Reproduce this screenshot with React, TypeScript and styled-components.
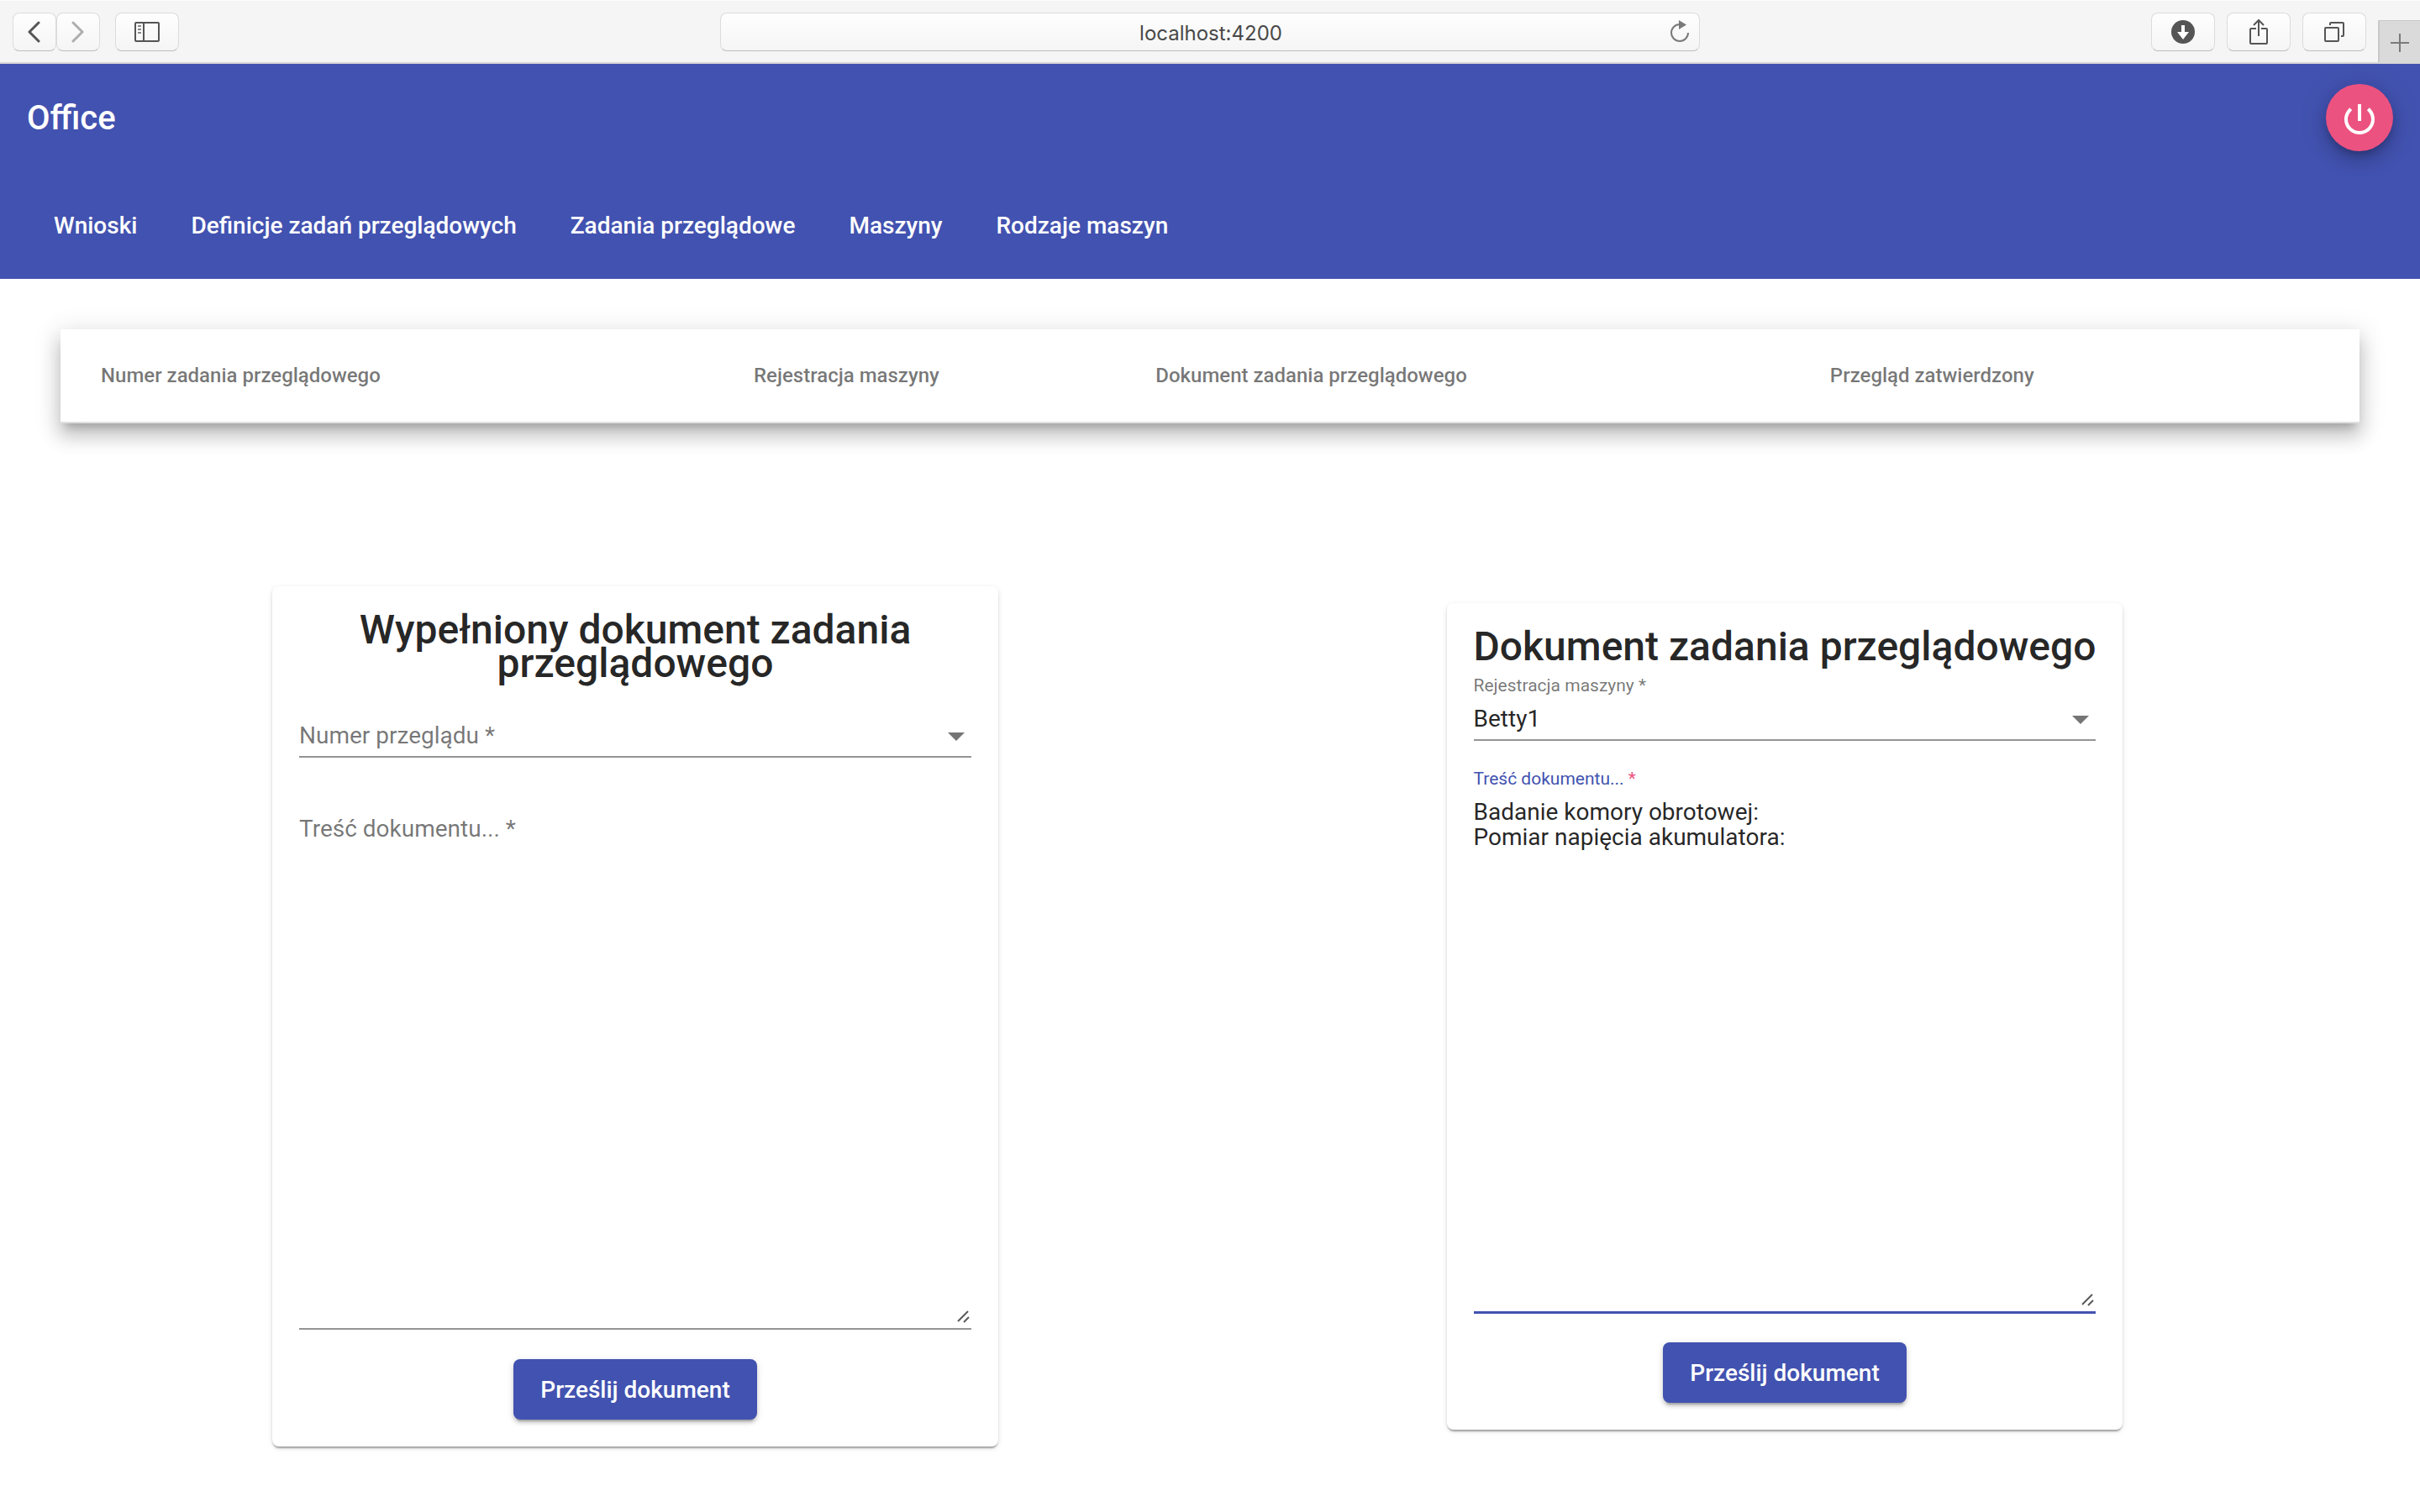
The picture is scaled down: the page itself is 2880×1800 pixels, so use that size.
import React from "react";
import styled, { createGlobalStyle, css } from "styled-components";

const indigo = "#4252b0";
const pink = "#ec5280";
const uiFont = `Roboto, "Liberation Sans", sans-serif`;

const GlobalStyle = createGlobalStyle`
  *, *::before, *::after { box-sizing: border-box; }
  body {
    margin: 0;
    background: #fff;
    color: rgba(0, 0, 0, 0.87);
    font-family: ${uiFont};
    font-size: 28px;
    line-height: 32px;
  }
  button, input, select, textarea { font: inherit; color: inherit; margin: 0; }
`;

/* Browser bar */

const BrowserBar = styled.div`
  display: grid;
  grid-template-columns: 1fr minmax(0, 1166px) 1fr;
  align-items: center;
  height: 76px;
  background: #f5f5f5;
  border-top: 1px solid #fcfcfc;
  border-bottom: 2px solid #d6d6d6;
`;

const BarStart = styled.div`
  display: flex;
  padding-left: 15px;
`;

const BarEnd = styled.div`
  display: flex;
  align-items: center;
  justify-content: flex-end;
  align-self: stretch;
  gap: 14px;
`;

const raised = css`
  border: 1px solid #dcdcdc;
  border-bottom-color: #bdbdbd;
  border-radius: 8px;
  background: linear-gradient(#fefefe, #f5f5f5);
  height: 46px;
`;

const BarButton = styled.button<{ $narrow?: boolean; $spaced?: boolean }>`
  ${raised}
  display: flex;
  align-items: center;
  justify-content: center;
  padding: 0;
  width: ${(p) => (p.$narrow ? 52 : 76)}px;
  margin-left: ${(p) => (p.$spaced ? 18 : 0)}px;
  color: #555;

  &:disabled {
    color: #aeaeae;
  }
`;

const AddressBox = styled.div`
  ${raised}
  display: grid;
  grid-template-columns: 36px 1fr 36px;
  align-items: center;
  padding: 0 5px 0 7px;
`;

const AddressInput = styled.input`
  grid-column: 2;
  width: 100%;
  border: 0;
  padding: 4px 0 0;
  background: none;
  outline: none;
  text-align: center;
  color: #484848;
  font-family: Inter, "Liberation Sans", sans-serif;
  font-size: 24px;
  line-height: 32px;
`;

const PlainIconButton = styled.button`
  display: flex;
  align-items: center;
  justify-content: center;
  border: 0;
  padding: 0;
  background: none;
  color: #7a7a7a;
`;

const NewTabButton = styled(PlainIconButton)`
  align-self: flex-end;
  width: 50px;
  height: 50px;
  padding-top: 3px;
  border-left: 2px solid #c8c8c8;
  border-top: 1px solid #c8c8c8;
  background: #dadada;
`;

/* Application header */

const Header = styled.header`
  background: ${indigo};
  color: #fff;
`;

const HeaderRow = styled.div`
  display: flex;
  align-items: center;
  justify-content: space-between;
  height: 128px;
  padding: 0 32px;
`;

const Brand = styled.span`
  padding-top: 2px;
  font-size: 40px;
  line-height: 64px;
  font-weight: 500;
`;

const PowerButton = styled.button`
  display: flex;
  align-items: center;
  justify-content: center;
  width: 80px;
  height: 80px;
  border: 0;
  border-radius: 50%;
  padding: 0;
  background: ${pink};
  color: #fff;
  box-shadow: 0 6px 10px -2px rgba(0, 0, 0, 0.2), 0 12px 20px rgba(0, 0, 0, 0.14),
    0 2px 36px rgba(0, 0, 0, 0.12);
`;

const Nav = styled.nav`
  display: flex;
  align-items: center;
  height: 128px;
  padding: 2px 32px 0;
`;

const NavLink = styled.a`
  padding: 0 32px;
  line-height: 72px;
  font-weight: 500;
  color: inherit;
  text-decoration: none;
`;

/* Content */

const Main = styled.main`
  padding: 60px 2.5% 72px;
`;

const TaskTable = styled.table`
  width: 100%;
  border-collapse: separate;
  border-spacing: 0;
  background: #fff;
  box-shadow: 0 10px 10px -6px rgba(0, 0, 0, 0.2), 0 16px 20px 2px rgba(0, 0, 0, 0.14),
    0 6px 28px 4px rgba(0, 0, 0, 0.12);
`;

const HeadCell = styled.th`
  height: 112px;
  padding: 0;
  border-bottom: 2px solid #e0e0e0;
  text-align: left;
  font-size: 24px;
  font-weight: 500;
  color: rgba(0, 0, 0, 0.54);

  &:first-child {
    padding-left: 48px;
  }
  &:last-child {
    padding-right: 48px;
  }
`;

const Cards = styled.div`
  display: grid;
  grid-template-columns: 1fr 1fr;
  align-items: center;
  justify-items: center;
  margin-top: 194px;
`;

const Card = styled.form`
  display: flex;
  flex-direction: column;
  padding: 32px;
  border-radius: 8px;
  background: #fff;
  box-shadow: 0 4px 2px -2px rgba(0, 0, 0, 0.2), 0 2px 2px rgba(0, 0, 0, 0.14),
    0 2px 6px rgba(0, 0, 0, 0.12);
`;

const WideCard = styled(Card)`
  width: 864px;
`;

const CardTitle = styled.h1`
  margin: 0;
  text-align: center;
  font-size: 48px;
  line-height: 40px;
  font-weight: 500;
`;

const Field = styled.div`
  display: grid;
  grid-template-columns: 1fr;
  grid-template-rows: 38px auto;

  & + & {
    margin-top: 19px;
  }
`;

const FloatingLabel = styled.label<{ $active?: boolean }>`
  grid-area: 1 / 1;
  padding-top: 14px;
  font-size: 21px;
  line-height: 24px;
  color: ${(p) => (p.$active ? indigo : "rgba(0, 0, 0, 0.54)")};
`;

const RestingLabel = styled.label`
  grid-area: 2 / 1;
  justify-self: start;
  z-index: 1;
  padding-top: 12px;
  color: rgba(0, 0, 0, 0.54);
  pointer-events: none;
`;

const RequiredMark = styled.span`
  color: ${pink};
`;

const underlined = css`
  grid-area: 2 / 1;
  width: 100%;
  border: 0;
  border-bottom: 2px solid #949494;
  border-radius: 0;
  outline: none;
  background: none;
`;

const Select = styled.select`
  ${underlined}
  appearance: none;
  height: 54px;
  padding: 12px 36px 8px 0;
`;

const SelectArrow = styled.svg`
  grid-area: 2 / 1;
  align-self: center;
  justify-self: end;
  margin: 4px 8px 0 0;
  fill: #757575;
  pointer-events: none;
`;

const TextArea = styled.textarea<{ $active?: boolean }>`
  ${underlined}
  display: block;
  height: 624px;
  padding: 13px 0 8px;
  line-height: 30px;
  resize: none;
  ${(p) =>
    p.$active &&
    css`
      border-bottom-color: ${indigo};
      box-shadow: 0 1px ${indigo};
    `}
`;

const ResizeGrip = styled.svg`
  grid-area: 2 / 1;
  align-self: end;
  justify-self: end;
  margin: 0 2px 8px 0;
  stroke: #5a5a5a;
  stroke-width: 2;
  pointer-events: none;
`;

const SubmitButton = styled.button`
  align-self: center;
  height: 72px;
  margin-top: 35px;
  padding: 2px 32px 0;
  border: 0;
  border-radius: 8px;
  background: ${indigo};
  color: #fff;
  font-weight: 500;
  box-shadow: 0 6px 2px -4px rgba(0, 0, 0, 0.2), 0 4px 4px rgba(0, 0, 0, 0.14),
    0 2px 10px rgba(0, 0, 0, 0.12);
`;

const Arrow = () => (
  <SelectArrow width="20" height="10" viewBox="0 0 20 10" aria-hidden="true">
    <path d="M0 0h20L10 10z" />
  </SelectArrow>
);

const Grip = () => (
  <ResizeGrip width="15" height="15" viewBox="0 0 15 15" aria-hidden="true">
    <path d="M1 13 13 1M8 14l6-6" />
  </ResizeGrip>
);

const navItems = [
  "Wnioski",
  "Definicje zadań przeglądowych",
  "Zadania przeglądowe",
  "Maszyny",
  "Rodzaje maszyn",
];

const columns = [
  "Numer zadania przeglądowego",
  "Rejestracja maszyny",
  "Dokument zadania przeglądowego",
  "Przegląd zatwierdzony",
];

function Browser() {
  return (
    <BrowserBar>
      <BarStart>
        <BarButton $narrow aria-label="Wstecz">
          <svg width="16" height="26" viewBox="0 0 16 26" fill="none" stroke="currentColor" strokeWidth="3">
            <path d="M13 2 2 13l11 11" strokeLinecap="round" strokeLinejoin="round" />
          </svg>
        </BarButton>
        <BarButton $narrow disabled aria-label="Dalej">
          <svg width="16" height="26" viewBox="0 0 16 26" fill="none" stroke="currentColor" strokeWidth="3">
            <path d="m2 2 11 11L2 24" strokeLinecap="round" strokeLinejoin="round" />
          </svg>
        </BarButton>
        <BarButton $spaced aria-label="Pasek boczny">
          <svg width="30" height="24" viewBox="0 0 30 24" fill="none" stroke="currentColor" strokeWidth="2">
            <rect x="1" y="1" width="28" height="22" rx="1" />
            <path d="M11 1v22" />
            <path d="M4 5h4M4 9h4M4 13h4" strokeOpacity="0.7" />
          </svg>
        </BarButton>
      </BarStart>
      <AddressBox>
        <AddressInput aria-label="Adres" defaultValue="localhost:4200" />
        <PlainIconButton aria-label="Odśwież">
          <svg width="26" height="28" viewBox="0 0 26 28" fill="none" stroke="currentColor" strokeWidth="2">
            <path d="M23 15a10 10 0 1 1-10-10h2" />
            <path d="M12 0v11l9-5.500z" fill="currentColor" stroke="none" />
          </svg>
        </PlainIconButton>
      </AddressBox>
      <BarEnd>
        <BarButton aria-label="Pobrane">
          <svg width="28" height="28" viewBox="0 0 28 28">
            <circle cx="14" cy="14" r="14" fill="currentColor" />
            <path d="M12 6h4v8h5l-7 9-7-9h5z" fill="#fff" />
          </svg>
        </BarButton>
        <BarButton aria-label="Udostępnij">
          <svg width="24" height="32" viewBox="0 0 24 32" fill="none" stroke="currentColor" strokeWidth="2">
            <path d="M9 12H3q-1 0-1 1v16q0 1 1 1h18q1 0 1-1V13q0-1-1-1h-6M12 21V2M6 8l6-6 6 6" />
          </svg>
        </BarButton>
        <BarButton aria-label="Karty">
          <svg width="26" height="26" viewBox="0 0 26 26" fill="none" stroke="currentColor" strokeWidth="2">
            <rect x="2" y="8" width="16" height="16" rx="1" />
            <path d="M8 5V3q0-1 1-1h14q1 0 1 1v14q0 1-1 1h-2" />
          </svg>
        </BarButton>
        <NewTabButton aria-label="Nowa karta">
          <svg width="22" height="22" viewBox="0 0 22 22" stroke="currentColor" strokeWidth="2">
            <path d="M0 11h22M11 0v22" />
          </svg>
        </NewTabButton>
      </BarEnd>
    </BrowserBar>
  );
}

export default function App() {
  return (
    <>
      <GlobalStyle />
      <Browser />
      <Header>
        <HeaderRow>
          <Brand>Office</Brand>
          <PowerButton aria-label="Wyloguj">
            <svg width="48" height="48" viewBox="0 -1 24 24" fill="currentColor">
              <path d="M13 3h-2v10h2V3zm4.830 2.170l-1.420 1.420C17.990 7.860 19 9.810 19 12c0 3.870-3.130 7-7 7s-7-3.130-7-7c0-2.190 1.010-4.140 2.580-5.420L6.170 5.170C4.230 6.820 3 9.260 3 12c0 4.970 4.030 9 9 9s9-4.030 9-9c0-2.740-1.230-5.180-3.170-6.830z" />
            </svg>
          </PowerButton>
        </HeaderRow>
        <Nav>
          {navItems.map((item) => (
            <NavLink key={item} href="#">
              {item}
            </NavLink>
          ))}
        </Nav>
      </Header>
      <Main>
        <TaskTable>
          <thead>
            <tr>
              {columns.map((column) => (
                <HeadCell key={column} scope="col">
                  {column}
                </HeadCell>
              ))}
            </tr>
          </thead>
        </TaskTable>
        <Cards>
          <WideCard onSubmit={(e) => e.preventDefault()}>
            <CardTitle>Wypełniony dokument zadania przeglądowego</CardTitle>
            <Field>
              <RestingLabel htmlFor="review-number">Numer przeglądu *</RestingLabel>
              <Select id="review-number" defaultValue="">
                <option value="" />
              </Select>
              <Arrow />
            </Field>
            <Field>
              <RestingLabel htmlFor="filled-content">Treść dokumentu... *</RestingLabel>
              <TextArea id="filled-content" />
              <Grip />
            </Field>
            <SubmitButton>Prześlij dokument</SubmitButton>
          </WideCard>
          <Card onSubmit={(e) => e.preventDefault()}>
            <CardTitle>Dokument zadania przeglądowego</CardTitle>
            <Field>
              <FloatingLabel htmlFor="machine">Rejestracja maszyny *</FloatingLabel>
              <Select id="machine" defaultValue="Betty1">
                <option>Betty1</option>
              </Select>
              <Arrow />
            </Field>
            <Field>
              <FloatingLabel htmlFor="content" $active>
                Treść dokumentu... <RequiredMark>*</RequiredMark>
              </FloatingLabel>
              <TextArea
                id="content"
                $active
                defaultValue={"Badanie komory obrotowej:\nPomiar napięcia akumulatora:"}
              />
              <Grip />
            </Field>
            <SubmitButton>Prześlij dokument</SubmitButton>
          </Card>
        </Cards>
      </Main>
    </>
  );
}
